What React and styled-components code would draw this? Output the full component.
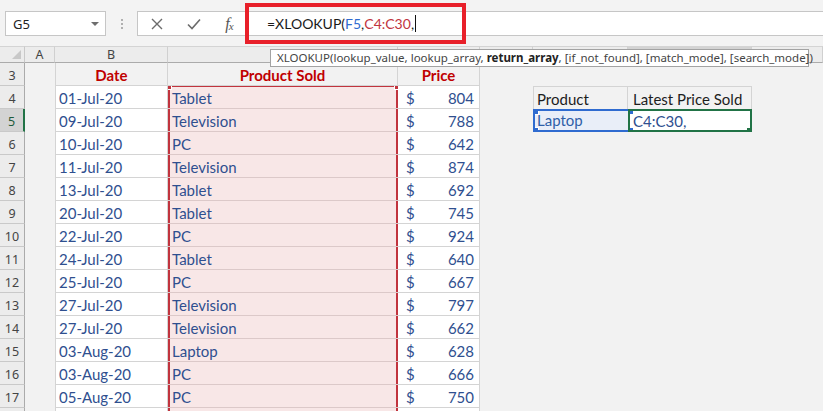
import React from "react";
import styled, { createGlobalStyle, css } from "styled-components";

const GlobalStyle = createGlobalStyle`
  html, body {
    margin: 0;
    padding: 0;
    background: #f2f2f2;
    overflow: hidden;
  }
  * {
    box-sizing: border-box;
  }
`;

const Window = styled.div`
  position: relative;
  width: 823px;
  height: 411px;
  overflow: hidden;
  background: #f2f2f2;
  font-family: Lato, "Liberation Sans", sans-serif;
`;

// ---------- formula bar ----------

const TopBar = styled.div`
  height: 46px;
  display: flex;
  align-items: flex-start;
  padding-top: 11px;
  background: #f3f3f3;
`;

const NameBox = styled.div`
  width: 101px;
  height: 25px;
  margin-left: 5px;
  background: #fff;
  border: 1px solid #c6c6c6;
  display: flex;
  align-items: center;
  justify-content: space-between;
  padding: 0 6px 0 7px;
  font: 13px "Noto Sans", sans-serif;
  color: #222;
`;

const Caret = styled.span`
  width: 0;
  height: 0;
  border-left: 4px solid transparent;
  border-right: 4px solid transparent;
  border-top: 4px solid #6e6e6e;
`;

const Grip = styled.div`
  width: 31px;
  height: 25px;
  display: flex;
  flex-direction: column;
  align-items: center;
  justify-content: center;
  gap: 2px;

  span {
    width: 2px;
    height: 2px;
    background: #b0b0b0;
  }
`;

const FormulaBox = styled.div`
  flex: 1;
  height: 25px;
  background: #fff;
  border: 1px solid #c6c6c6;
  border-right: none;
  display: flex;
  align-items: center;
`;

const BarButton = styled.span`
  width: ${(p) => p.$w || 37}px;
  display: flex;
  justify-content: center;
  align-items: center;
  color: #6b6b6b;
`;

const Fx = styled.span`
  font: italic 16px "Liberation Serif", serif;
  color: #555;
  letter-spacing: -1px;

  sub {
    font-size: 11px;
    vertical-align: -1px;
  }
`;

const FormulaText = styled.div`
  margin-left: 21px;
  font-size: 14px;
  color: #1a1a1a;
  display: flex;
  align-items: center;
`;

const Ref = styled.span`
  color: ${(p) => p.$color};
`;

const TextCursor = styled.span`
  width: 1px;
  height: 17px;
  background: #111;
  margin-left: 1px;
`;

const Callout = styled.div`
  position: absolute;
  left: 245px;
  top: 3px;
  width: 221px;
  height: 41px;
  border: 4px solid #e8202a;
  pointer-events: none;
`;

const Tooltip = styled.div`
  position: absolute;
  left: 270px;
  top: 49px;
  width: 539px;
  height: 18px;
  background: #fff;
  border: 1px solid #a3a3a3;
  padding: 0 6px;
  font: 11.5px "Noto Sans", sans-serif;
  line-height: 16px;
  color: #444;
  white-space: nowrap;
  z-index: 3;

  b {
    color: #222;
  }
`;

// ---------- grid ----------

const Sheet = styled.div`
  display: grid;
  grid-template-columns: 25px 30px 113px 230px 82px 53px 95px 124px 1fr;
  grid-template-rows: 17px;
  grid-auto-rows: 23px;
`;

const Corner = styled.div`
  position: relative;
  background: #ececec;
  border-right: 1px solid #c9c9c9;
  border-bottom: 1px solid #ababab;
  border-top: 1px solid #d4d4d4;

  &::after {
    content: "";
    position: absolute;
    right: 3px;
    bottom: 3px;
    border-left: 9px solid transparent;
    border-bottom: 9px solid #c8c8c8;
  }
`;

const ColHead = styled.div`
  background: ${(p) => (p.$active ? "#d3d3d3" : "#ececec")};
  border-top: 1px solid #d4d4d4;
  border-right: 1px solid #d0d0d0;
  border-bottom: ${(p) => (p.$active ? "2px solid #217346" : "1px solid #ababab")};
  display: flex;
  align-items: center;
  justify-content: center;
  font: 12.5px "Noto Sans", sans-serif;
  color: #444;
`;

const RowHead = styled.div`
  background: ${(p) => (p.$active ? "#d3d3d3" : "#ececec")};
  border-bottom: 1px solid #c9c9c9;
  border-right: ${(p) => (p.$active ? "2px solid #217346" : "1px solid #ababab")};
  display: flex;
  align-items: center;
  justify-content: center;
  font: 12.5px "Noto Sans", sans-serif;
  color: ${(p) => (p.$active ? "#1e5a3a" : "#444")};
  padding-top: 2px;
`;

const Blank = styled.div`
  background: #f2f2f2;
`;

const cellText = css`
  display: flex;
  align-items: flex-end;
  padding-bottom: 1px;
  font-size: 15px;
  line-height: 18px;
  white-space: nowrap;
  overflow: hidden;
`;

const TitleCell = styled.div`
  ${cellText};
  justify-content: center;
  border-right: 1px solid #d4d4d4;
  border-bottom: 1px solid #d4d4d4;
  border-left: ${(p) => (p.$first ? "1px solid #d4d4d4" : "none")};
  color: #c00000;
  font-weight: 700;
`;

const DataCell = styled.div`
  ${cellText};
  background: #fff;
  color: #2f4f8f;
  padding-left: 3px;
  border-right: 1px solid #d4d4d4;
  border-bottom: 1px solid #d4d4d4;
  border-left: ${(p) => (p.$first ? "1px solid #d4d4d4" : "none")};
`;

const RangeCell = styled.div`
  ${cellText};
  position: relative;
  background: #f8e7e7;
  color: #2f4f8f;
  padding-left: 4px;
  border-bottom: 1px solid #dcc9c9;

  &::before {
    content: "";
    position: absolute;
    left: 0;
    right: 0;
    top: ${(p) => (p.$top ? "-1px" : "0")};
    bottom: -1px;
    border-left: 2px solid #c1343e;
    border-right: 2px solid #c1343e;
    border-top: ${(p) => (p.$top ? "2px solid #c1343e" : "none")};
  }
`;

const PriceCell = styled(DataCell)`
  justify-content: space-between;
  padding-left: 8px;
  padding-right: 5px;
`;

const Handle = styled.span`
  position: absolute;
  width: 6px;
  height: 6px;
  background: ${(p) => p.$color};
  outline: 1px solid #fff;
  z-index: 2;
  ${(p) => (p.$x === "left" ? "left: -3px;" : "right: -3px;")}
  ${(p) => (p.$y === "top" ? "top: -3px;" : "bottom: -4px;")}
`;

const LookupHead = styled.div`
  ${cellText};
  color: #1d1d1d;
  padding-left: ${(p) => (p.$first ? 3 : 5)}px;
  border-top: 1px solid #d4d4d4;
  border-right: 1px solid #d4d4d4;
  border-left: ${(p) => (p.$first ? "1px solid #d4d4d4" : "none")};
`;

const InputCell = styled.div`
  ${cellText};
  position: relative;
  background: #e9eef8;
  color: #2f5fa8;
  padding-left: 2px;
  border: 2px solid #2f6bd0;
  border-right: none;
`;

const ActiveCell = styled.div`
  ${cellText};
  position: relative;
  background: #fff;
  color: #2f4f8f;
  padding-left: 3px;
  padding-bottom: 0;
  border: 2px solid #217346;
`;

const data = [
  ["01-Jul-20", "Tablet", 804],
  ["09-Jul-20", "Television", 788],
  ["10-Jul-20", "PC", 642],
  ["11-Jul-20", "Television", 874],
  ["13-Jul-20", "Tablet", 692],
  ["20-Jul-20", "Tablet", 745],
  ["22-Jul-20", "PC", 924],
  ["24-Jul-20", "Tablet", 640],
  ["25-Jul-20", "PC", 667],
  ["27-Jul-20", "Television", 797],
  ["27-Jul-20", "Television", 662],
  ["03-Aug-20", "Laptop", 628],
  ["03-Aug-20", "PC", 666],
  ["05-Aug-20", "PC", 750],
];

const columns = ["A", "B", "C", "D", "E", "F", "G", "H"];

function Side({ row }) {
  if (row === 4) {
    return (
      <>
        <LookupHead $first>Product</LookupHead>
        <LookupHead>Latest Price Sold</LookupHead>
      </>
    );
  }
  if (row === 5) {
    return (
      <>
        <InputCell>
          Laptop
          <Handle $color="#2f6bd0" $x="left" $y="top" />
          <Handle $color="#2f6bd0" $x="left" $y="bottom" />
        </InputCell>
        <ActiveCell>
          C4:C30,
          <Handle $color="#2f6bd0" $x="left" $y="top" />
          <Handle $color="#2f6bd0" $x="left" $y="bottom" />
          <Handle $color="#217346" $x="right" $y="bottom" />
        </ActiveCell>
      </>
    );
  }
  return (
    <>
      <Blank />
      <Blank />
    </>
  );
}

function DataRow({ row, date, product, price }) {
  return (
    <>
      <RowHead $active={row === 5}>{row}</RowHead>
      <Blank />
      <DataCell $first>{date}</DataCell>
      <RangeCell $top={row === 4}>
        {product}
        {row === 4 && (
          <>
            <Handle $color="#c1343e" $x="left" $y="top" />
            <Handle $color="#c1343e" $x="right" $y="top" />
          </>
        )}
      </RangeCell>
      <PriceCell>
        {price && (
          <>
            <span>$</span>
            <span>{price}</span>
          </>
        )}
      </PriceCell>
      <Blank />
      <Side row={row} />
      <Blank />
    </>
  );
}

export default function App() {
  return (
    <Window>
      <GlobalStyle />
      <TopBar>
        <NameBox>
          G5
          <Caret />
        </NameBox>
        <Grip>
          <span />
          <span />
          <span />
        </Grip>
        <FormulaBox>
          <BarButton>
            <svg width="12" height="12" viewBox="0 0 12 12">
              <path d="M1 1 L11 11 M11 1 L1 11" stroke="#6b6b6b" strokeWidth="1.4" />
            </svg>
          </BarButton>
          <BarButton>
            <svg width="14" height="12" viewBox="0 0 14 12">
              <path d="M1 6.5 L5 10.5 L13 1.5" stroke="#6b6b6b" strokeWidth="1.6" fill="none" />
            </svg>
          </BarButton>
          <BarButton $w={34}>
            <Fx>
              f<sub>x</sub>
            </Fx>
          </BarButton>
          <FormulaText>
            =XLOOKUP(<Ref $color="#2f6bd0">F5</Ref>,<Ref $color="#c1343e">C4:C30</Ref>,
            <TextCursor />
          </FormulaText>
        </FormulaBox>
      </TopBar>

      <Sheet>
        <Corner />
        {columns.map((c) => (
          <ColHead key={c} $active={c === "G"}>
            {c}
          </ColHead>
        ))}

        <RowHead>3</RowHead>
        <Blank />
        <TitleCell $first>Date</TitleCell>
        <TitleCell>Product Sold</TitleCell>
        <TitleCell>Price</TitleCell>
        <Blank />
        <Blank />
        <Blank />
        <Blank />

        {data.map(([date, product, price], i) => (
          <DataRow key={i} row={i + 4} date={date} product={product} price={price} />
        ))}
        <DataRow row={18} date="" product="" price={null} />
      </Sheet>

      <Callout />
      <Tooltip>
        XLOOKUP(lookup_value, lookup_array, <b>return_array</b>, [if_not_found], [match_mode], [search_mode])
      </Tooltip>
    </Window>
  );
}
